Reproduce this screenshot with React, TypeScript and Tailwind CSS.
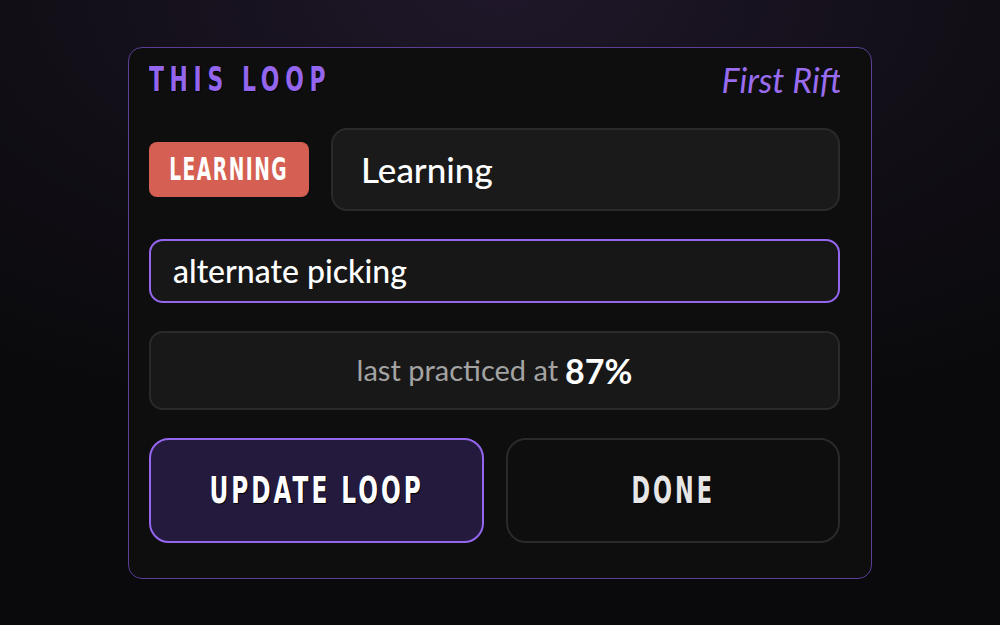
import React from 'react';

const cond = "font-['Liberation_Sans_Narrow','DejaVu_Sans_Condensed',sans-serif] font-bold font-stretch-condensed uppercase";
const lato = "font-['Lato','Noto_Sans',sans-serif]";

export default function App() {
  return (
    <div className="w-full h-[625px] flex items-center justify-center bg-[radial-gradient(ellipse_90%_70%_at_50%_0%,#1f1729_0%,#110e16_55%,#0a0a0c_100%)]">
      <div className="w-[744px] h-[532px] flex flex-col gap-[28px] border border-[#5a3f94] rounded-[14px] bg-[#0e0e0f] pl-5 pr-[31px] pt-[12px]">
        {/* header */}
        <div className="h-[40px] flex items-center justify-between overflow-hidden">
          <span className={`${cond} inline-block origin-left scale-x-[0.87] scale-y-[1.2] text-[28px] leading-none tracking-[6.5px] text-[#9466ee] [text-shadow:1px_1px_0_#000]`}>
            This Loop
          </span>
          <span className={`${lato} italic text-[34px] leading-none text-[#9a6cf0] whitespace-nowrap mr-[-2px]`}>
            First Rift
          </span>
        </div>

        {/* status + name */}
        <div className="h-[83px] flex items-center gap-[22px]">
          <div className="w-[160px] h-[55px] shrink-0 flex items-center justify-center rounded-[8px] bg-[#d45f52]">
            <span className={`${cond} inline-block scale-x-[0.83] scale-y-[1.25] text-[25px] leading-none tracking-[1.8px] text-white`}>
              Learning
            </span>
          </div>
          <div className="flex-1 h-full flex items-center pl-[28px] rounded-[16px] border-2 border-[#2a2a2a] bg-[#1a1a1a]">
            <span className={`${lato} font-medium text-[35px] text-white`}>Learning</span>
          </div>
        </div>

        {/* technique */}
        <div className="h-[64px] flex items-center pl-[22px] rounded-[14px] border-2 border-[#9466ee] bg-[#171717]">
          <span className={`${lato} font-medium text-[32px] text-white`}>alternate picking</span>
        </div>

        {/* last practiced */}
        <div className="h-[79px] flex items-center justify-center gap-[7px] rounded-[14px] border-2 border-[#2a2a2a] bg-[#181818]">
          <span className={`${lato} text-[29px] text-[#a3a3a3]`}>last practiced at</span>
          <span className={`${lato} font-bold text-[34px] text-white`}>87%</span>
        </div>

        {/* actions */}
        <div className="h-[105px] grid grid-cols-2 gap-[22px]">
          <button className="flex items-center justify-center rounded-[20px] border-2 border-[#9466ee] bg-[#241a3e]">
            <span className={`${cond} inline-block scale-x-[0.86] scale-y-[1.26] text-[30px] leading-none tracking-[3.5px] text-white [text-shadow:1px_1px_0_#000]`}>
              Update Loop
            </span>
          </button>
          <button className="flex items-center justify-center rounded-[20px] border-2 border-[#2a2a2a] bg-[#0e0e0e]">
            <span className={`${cond} inline-block scale-x-[0.83] scale-y-[1.26] text-[30px] leading-none tracking-[3.5px] text-[#e6e6e6] [text-shadow:1px_1px_0_#000]`}>
              Done
            </span>
          </button>
        </div>
      </div>
    </div>
  );
}
